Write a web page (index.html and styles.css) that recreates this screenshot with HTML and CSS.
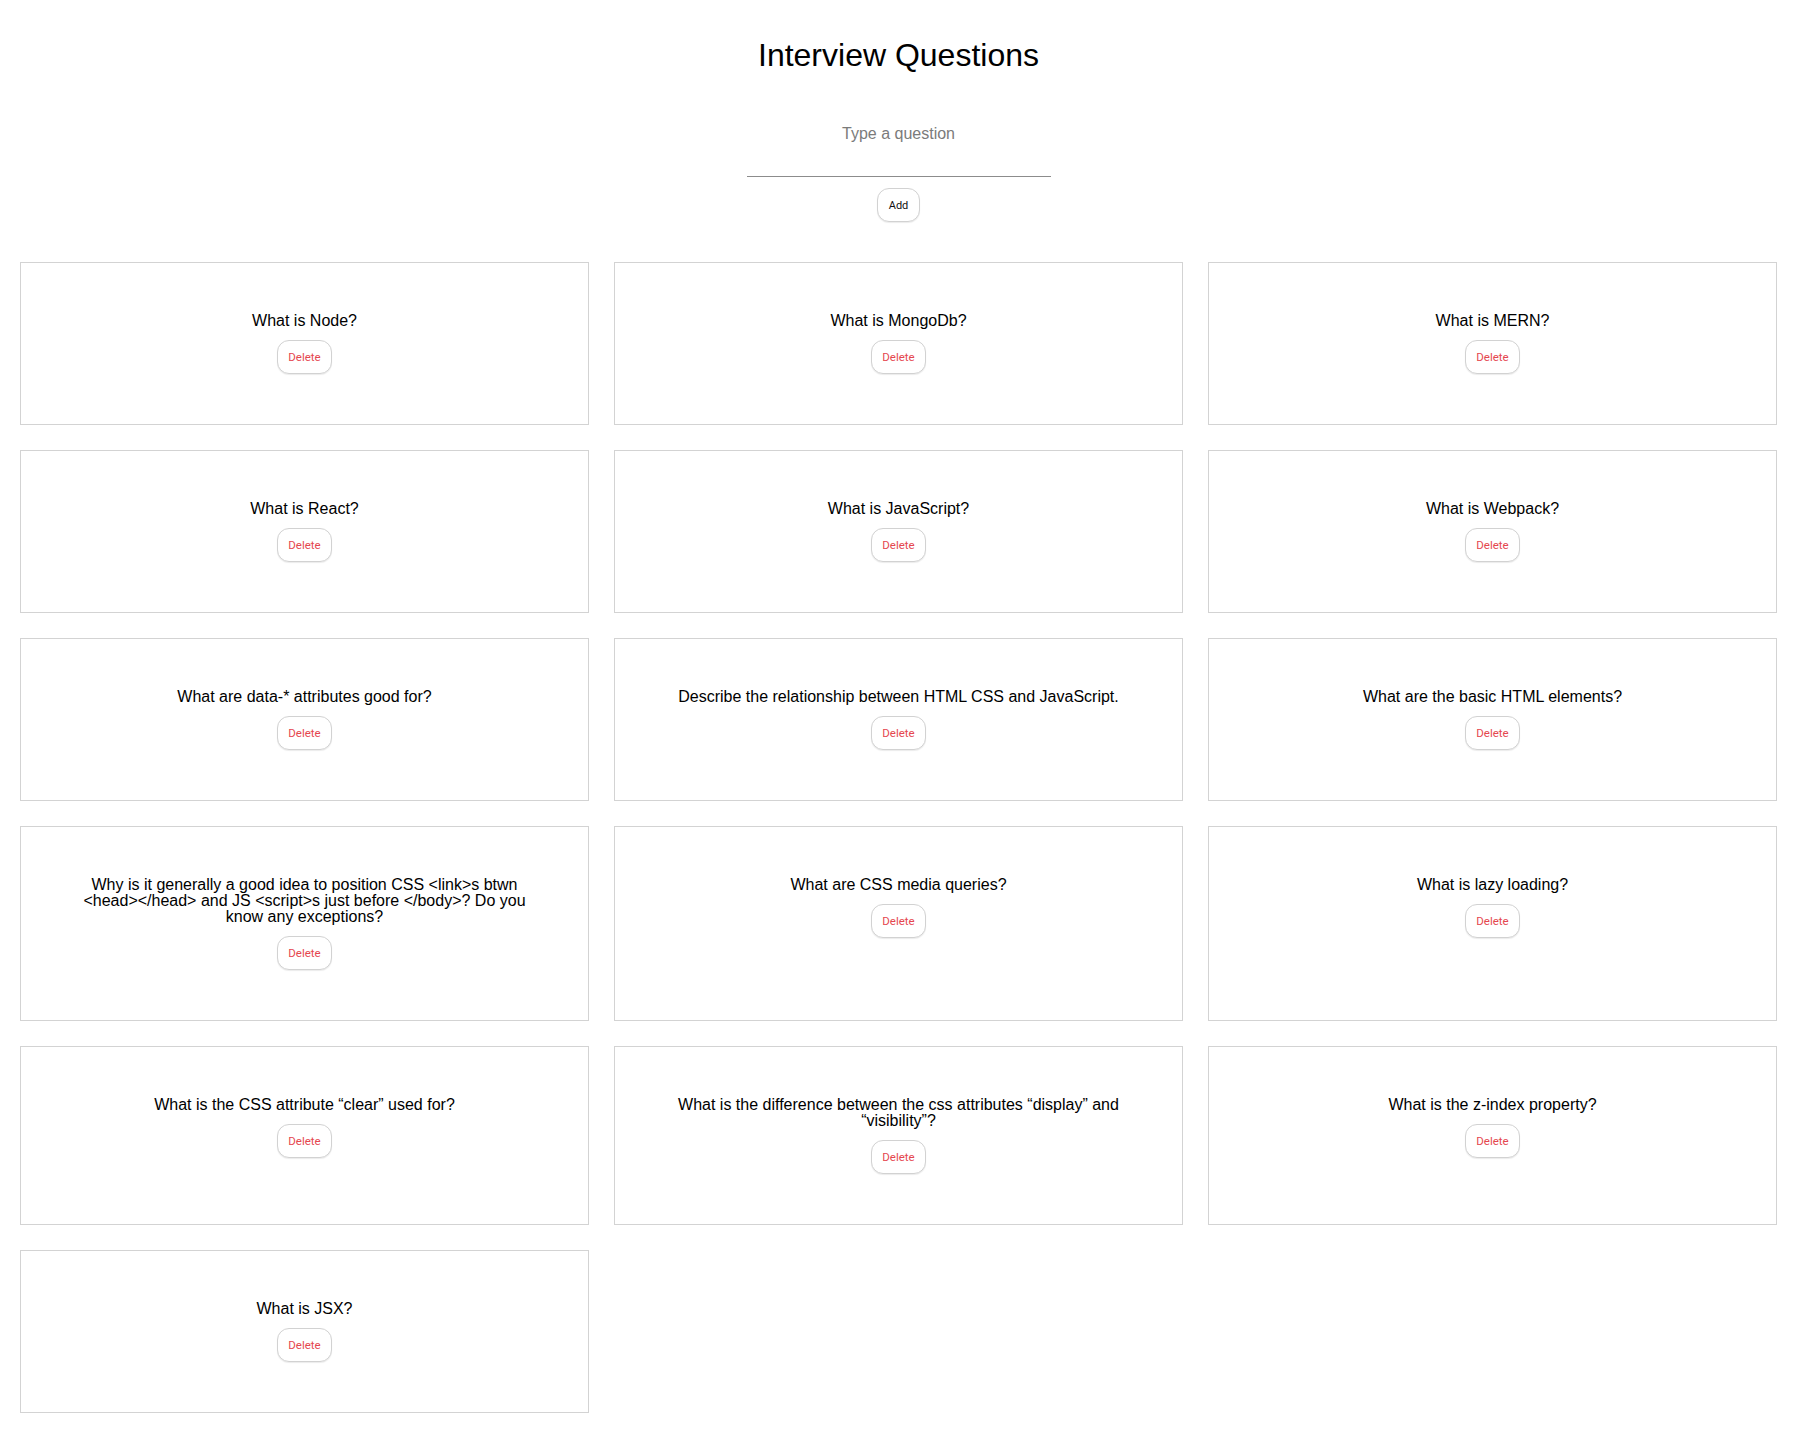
FILE: index.html
```html
<!DOCTYPE html>
<html lang="en">
<head>
<meta charset="utf-8">
<title>Interview Questions</title>
<link rel="stylesheet" href="styles.css">
</head>
<body>
<div class="app">
  <header class="header">
    <h1 class="title">Interview Questions</h1>
    <input class="question-input" type="text" placeholder="Type a question">
    <button class="btn btn-add">Add</button>
  </header>
  <main class="grid">
    <div class="card"><p class="card-text">What is Node?</p><button class="btn btn-delete">Delete</button></div>
    <div class="card"><p class="card-text">What is MongoDb?</p><button class="btn btn-delete">Delete</button></div>
    <div class="card"><p class="card-text">What is MERN?</p><button class="btn btn-delete">Delete</button></div>
    <div class="card"><p class="card-text">What is React?</p><button class="btn btn-delete">Delete</button></div>
    <div class="card"><p class="card-text">What is JavaScript?</p><button class="btn btn-delete">Delete</button></div>
    <div class="card"><p class="card-text">What is Webpack?</p><button class="btn btn-delete">Delete</button></div>
    <div class="card"><p class="card-text">What are data-* attributes good for?</p><button class="btn btn-delete">Delete</button></div>
    <div class="card"><p class="card-text">Describe the relationship between HTML CSS and JavaScript.</p><button class="btn btn-delete">Delete</button></div>
    <div class="card"><p class="card-text">What are the basic HTML elements?</p><button class="btn btn-delete">Delete</button></div>
    <div class="card"><p class="card-text">Why is it generally a good idea to position CSS &lt;link&gt;s btwn &lt;head&gt;&lt;/head&gt; and JS &lt;script&gt;s just before &lt;/body&gt;? Do you know any exceptions?</p><button class="btn btn-delete">Delete</button></div>
    <div class="card"><p class="card-text">What are CSS media queries?</p><button class="btn btn-delete">Delete</button></div>
    <div class="card"><p class="card-text">What is lazy loading?</p><button class="btn btn-delete">Delete</button></div>
    <div class="card"><p class="card-text">What is the CSS attribute “clear” used for?</p><button class="btn btn-delete">Delete</button></div>
    <div class="card"><p class="card-text">What is the difference between the css attributes “display” and “visibility”?</p><button class="btn btn-delete">Delete</button></div>
    <div class="card"><p class="card-text">What is the z-index property?</p><button class="btn btn-delete">Delete</button></div>
    <div class="card"><p class="card-text">What is JSX?</p><button class="btn btn-delete">Delete</button></div>
  </main>
</div>
</body>
</html>
```

FILE: styles.css
```css
html, body {
  margin: 0;
  padding: 0;
  background: #ffffff;
}

body {
  font-family: "Liberation Sans", Arial, Helvetica, sans-serif;
  color: #000;
}

.app {
  padding: 20px 20px 0;
}

.header {
  display: flex;
  flex-direction: column;
  align-items: center;
}

.title {
  margin: 17px 0 17px;
  font-size: 32px;
  line-height: 37px;
  font-weight: 400;
}

.question-input {
  width: 304px;
  box-sizing: border-box;
  padding: 34px 0;
  margin: 0;
  font-family: "Liberation Sans", Arial, sans-serif;
  font-size: 16px;
  line-height: 17px;
  height: 86px;
  text-align: center;
  border: none;
  border-bottom: 1px solid #8c8c8c;
  outline: none;
  background: transparent;
}

.question-input::placeholder {
  color: #7b7b7b;
}

.btn {
  font-family: Roboto, "Liberation Sans", Arial, sans-serif;
  background: #fff;
  border: 1px solid #d2d2d2;
  border-radius: 12px;
  box-shadow: 0 1px 1px rgba(0, 0, 0, 0.08);
  height: 34px;
  box-sizing: border-box;
  font-size: 11px;
  cursor: pointer;
}

.btn-add {
  margin-top: 11px;
  width: 43px;
  padding: 0;
  color: #111;
}

.grid {
  margin-top: 40px;
  display: grid;
  grid-template-columns: repeat(3, 1fr);
  column-gap: 25px;
  row-gap: 25px;
}

.card {
  border: 1px solid #d3d3d3;
  padding: 50px 54px 50px;
  display: flex;
  flex-direction: column;
  align-items: center;
  text-align: center;
}

.card-text {
  margin: 0;
  font-size: 16px;
  line-height: 16px;
}

.btn-delete {
  margin-top: 11px;
  width: 55px;
  padding: 0;
  color: #e5474f;
  font-size: 11.5px;
}
```
